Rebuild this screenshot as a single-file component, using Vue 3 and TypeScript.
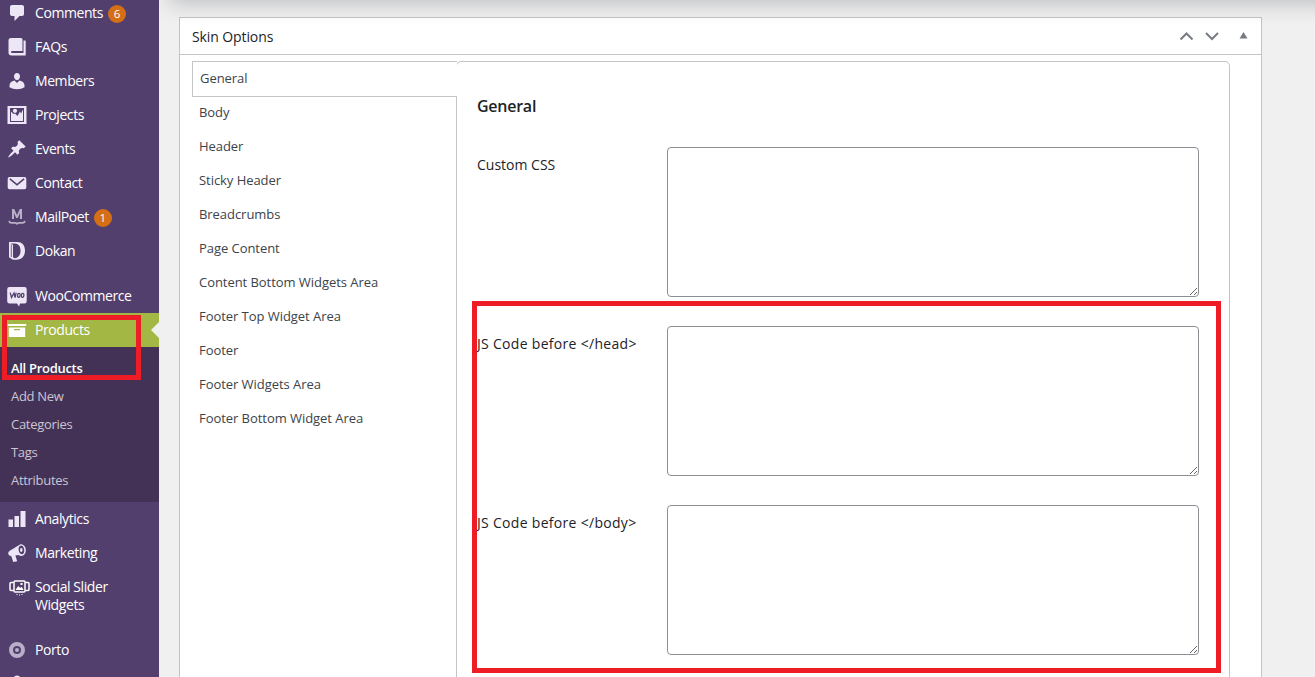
<script setup lang="ts">
import { ref } from 'vue'

interface MenuItem {
  label: string
  icon: string
  badge?: number
  current?: boolean
  gap?: boolean
}

const menuTop: MenuItem[] = [
  { label: 'Comments', icon: 'comments', badge: 6 },
  { label: 'FAQs', icon: 'book' },
  { label: 'Members', icon: 'member' },
  { label: 'Projects', icon: 'gallery' },
  { label: 'Events', icon: 'pin' },
  { label: 'Contact', icon: 'mail' },
  { label: 'MailPoet', icon: 'mailpoet', badge: 1 },
  { label: 'Dokan', icon: 'dokan' },
  { label: 'WooCommerce', icon: 'woo', gap: true },
  { label: 'Products', icon: 'archive', current: true },
]
const submenu = ['All Products', 'Add New', 'Categories', 'Tags', 'Attributes']
const menuBottom: MenuItem[] = [
  { label: 'Analytics', icon: 'bars' },
  { label: 'Marketing', icon: 'megaphone' },
  { label: 'Social Slider Widgets', icon: 'slider' },
  { label: 'Porto', icon: 'porto', gap: true },
  { label: '', icon: 'next' },
]
const groups = [menuTop, menuBottom]

const tabs = [
  'General', 'Body', 'Header', 'Sticky Header', 'Breadcrumbs', 'Page Content',
  'Content Bottom Widgets Area', 'Footer Top Widget Area', 'Footer',
  'Footer Widgets Area', 'Footer Bottom Widget Area',
]
const activeTab = ref('General')

const fields = ref([
  { label: 'Custom CSS', value: '' },
  { label: 'JS Code before </head>', value: '' },
  { label: 'JS Code before </body>', value: '' },
])
</script>

<template>
  <div class="screen">
    <nav class="sidebar">
      <template v-for="(group, g) in groups" :key="g">
        <a
          v-for="item in group"
          :key="item.icon"
          class="item"
          :class="{ current: item.current, gap: item.gap }"
        >
          <svg class="icon" viewBox="0 0 20 20" width="20" height="20">
            <path v-if="item.icon === 'comments'" d="M5 2h10q2 0 2 2v7q0 2-2 2h-2.500l-5 5v-5H5q-2 0-2-2V4q0-2 2-2z" />
            <path v-else-if="item.icon === 'book'" fill-rule="evenodd" d="M4 1h10q1.500 0 1.500 1.500V14H5q-1 0-1 1t1 1h11.500V3.500H18q.7 0 .7.700V18.500H4.500Q1.500 18.500 1.500 15.500V3.500Q1.500 1 4 1z" />
            <path v-else-if="item.icon === 'member'" d="M10 9.200c1.700 0 3-1.700 3-3.900C13 3.300 11.700 2 10 2S7 3.300 7 5.300c0 2.200 1.300 3.900 3 3.900zM7.500 9.500 10 12l2.500-2.500c3.200.5 5 2.400 5 5v1.700Q14.500 18.200 10 18.200T2.500 16.200v-1.700c0-2.600 1.800-4.500 5-5z" />
            <g v-else-if="item.icon === 'gallery'">
              <path fill-rule="evenodd" d="M.5 1h19v18h-19zM3 3v14h14V3z" />
              <path d="M4 16V6.500L6.500 9 8 8.500l2.500 2.500L13 6.500l1 2L16 4.500V16z" />
              <circle cx="8" cy="5.800" r="2.100" />
            </g>
            <path v-else-if="item.icon === 'pin'" d="m10.440 3.020 1.820-1.820 6.360 6.350-1.830 1.820c-1.050-.68-2.480-.57-3.410.36l-.75.750c-.92.930-1.040 2.350-.35 3.410l-1.830 1.820-2.410-2.410-2.800 2.790c-.42.420-3.380 2.710-3.800 2.290s1.860-3.390 2.280-3.810l2.790-2.790L4.100 9.360l1.830-1.820c1.050.69 2.480.57 3.400-.36l.75-.75c.93-.92 1.050-2.350.36-3.410z" />
            <path v-else-if="item.icon === 'mail'" fill-rule="evenodd" d="M2.500 4h15q1.800 0 1.800 1.800v8.700q0 1.800-1.800 1.800h-15q-1.800 0-1.800-1.800V5.800Q.7 4 2.500 4zM3.400 5.300l-1 1.100L10 12.800l7.600-6.400-1-1.100-6.600 5.500z" />
            <g v-else-if="item.icon === 'mailpoet'" class="dim">
              <path d="M5 12V2h2.200L10 8l2.800-6H15v10h-2V6l-2.200 5H9.200L7 6v6z" />
              <path d="M2.200 13.800q.2 2 2.300 2h3.500q2 0 2 1.700 0-1.700 2-1.700h3.500q2.100 0 2.300-2" fill="none" stroke="currentColor" stroke-width="1.700" />
            </g>
            <g v-else-if="item.icon === 'dokan'">
              <path fill-rule="evenodd" d="M2 1h8c5.200 0 8 3.300 8 8.500 0 5.500-3 9.200-8.500 9.200H6l-4-2.500zM6 3.800v12.700l1.800.7c4-.4 5.700-3.500 5.700-7.500 0-3.700-1.500-6.600-5.500-7.100-1.500-.2-3.300-.2-4.500 0z" />
              <path d="M4.300 3.500v12.500" fill="none" stroke="#523f6d" stroke-width=".8" />
            </g>
            <g v-else-if="item.icon === 'woo'">
              <path d="M2.500 1h15q2.200 0 2.200 2.200v12q0 2.200-2.200 2.200H13l-1 3-2-3H2.500Q.2 17.400.2 15.200v-12Q.2 1 2.500 1z" />
              <g class="wooMark">
                <path d="M3.200 6.700 4.500 11.500 7 7l1 4.500 1.200-4.800" />
                <ellipse cx="11.800" cy="9.300" rx="1.300" ry="2" transform="rotate(12 11.800 9.300)" />
                <ellipse cx="15.600" cy="9.300" rx="1.300" ry="2" transform="rotate(12 15.600 9.300)" />
              </g>
            </g>
            <path v-else-if="item.icon === 'archive'" fill-rule="evenodd" d="M.8 4h18.400v2H.8zM1.800 7.500h16.400v9.500H1.800zM7 9v1.200h6V9z" />
            <path v-else-if="item.icon === 'bars'" d="M13.500 2h5v16h-5zM7.500 7H12v11H7.500zM1.500 10.500H6V18H1.500z" />
            <g v-else-if="item.icon === 'megaphone'">
              <path fill-rule="evenodd" d="M13.500 1.200c3.200 0 5.300 2.600 5.300 6s-2 5.700-4.400 5.700c-1 0-2-.4-3-.9l-3 .5 1.800 5.800-4 .8-1.800-5.800C2.500 13 1.200 11.700 1.200 10.300S2.300 7.700 4 6.900zM14.200 2.500c-1.900.1-2.900 2-2.600 4.300.3 2.800 1.700 4.700 3.500 4.400 1.700-.3 2.400-2.200 2.100-4.500-.3-2.600-1.500-4.200-3-4.200z" />
              <ellipse cx="14.300" cy="7" rx="1.300" ry="2" />
            </g>
            <g v-else-if="item.icon === 'slider'" class="wide" transform="translate(.5 .5)">
              <rect x="6.500" y="3.500" width="11" height="11" rx="1" />
              <path d="M6 5H3.500q-1 0-1 1v6q0 1 1 1H6M18 5h2.500q1 0 1 1v6q0 1-1 1H18" />
              <path class="solid" d="m8 12.500 2.700-4 2 2 1.400-1.200 2 3.200zM13 5.500h2v2h-2zM9 16.500h1v1H9zM11.500 17h1v1h-1zM14 16.500h1v1h-1z" />
            </g>
            <g v-else-if="item.icon === 'porto'" class="dim">
              <circle cx="10" cy="10" r="6" fill="none" stroke="currentColor" stroke-width="4" />
              <circle cx="10" cy="10" r="2" />
            </g>
            <circle v-else cx="10" cy="5" r="3.500" />
          </svg>
          <span class="label">{{ item.label }}</span>
          <span v-if="item.badge" class="badge">{{ item.badge }}</span>
        </a>
        <div v-if="g === 0" class="submenu">
          <a v-for="(sub, i) in submenu" :key="sub" :class="{ selected: i === 0 }">{{ sub }}</a>
        </div>
      </template>
    </nav>

    <main class="content">
      <section class="metabox">
        <header class="metaHead">
          <h2>Skin Options</h2>
          <svg class="controls" width="74" height="16" viewBox="0 0 74 16">
            <path class="chevron" d="m2.500 11.500 6-6 6 6" />
            <path class="chevron" d="m28 5 6 6 6-6" />
            <path class="toggle" d="M65.500 4 69.500 10.500h-8z" />
          </svg>
        </header>
        <div class="metaBody">
          <ul class="tabs">
            <li
              v-for="tab in tabs"
              :key="tab"
              :class="{ active: tab === activeTab }"
              @click="activeTab = tab"
            >{{ tab }}</li>
          </ul>
          <div class="panel">
            <h3>{{ activeTab }}</h3>
            <label v-for="field in fields" :key="field.label" class="field">
              <span>{{ field.label }}</span>
              <textarea v-model="field.value" spellcheck="false"></textarea>
            </label>
          </div>
        </div>
      </section>
    </main>

    <div class="topShadow"></div>
    <div class="mark markMenu"></div>
    <div class="mark markFields"></div>
  </div>
</template>

<style>
html, body { margin: 0; overflow: hidden; }
</style>

<style scoped>
* { box-sizing: border-box; }
.screen {
  position: relative;
  display: flex;
  width: 1315px;
  height: 677px;
  overflow: hidden;
  background: #f0f0f0;
  font-family: "Open Sans", "Noto Sans", sans-serif;
  font-size: 13px;
  color: #1d2327;
}
.sidebar {
  width: 159px;
  height: 681px;
  margin-top: -4px;
  flex: none;
  background: #523f6d;
  z-index: 1;
}
.item {
  position: relative;
  display: flex;
  align-items: flex-start;
  min-height: 34px;
  padding: 8px 20px 8px 7px;
  color: #fff;
  font-size: 14px;
  line-height: 18px;
  letter-spacing: -0.42px;
}
.item.gap { margin-top: 11px; }
.item.current { background: #a3b745; }
.item.current::after {
  content: "";
  position: absolute;
  right: 0;
  top: 9px;
  border: 8px solid transparent;
  border-left: 0;
  border-right-color: #f0f0f0;
}
.icon {
  flex: none;
  margin: -1px 8px -1px 0;
  overflow: visible;
  fill: currentColor;
  color: #ece6f6;
}
.current .icon { color: #fff; }
.dim { color: #b9afc8; fill: currentColor; }
.wooMark { fill: none; stroke: #523f6d; stroke-width: 1.3; }
.wide { fill: none; stroke: #fff; stroke-width: 1.5; }
.wide .solid { fill: #fff; stroke: none; }
.badge {
  width: 18px;
  height: 18px;
  margin: 1px 0 -1px 5px;
  border-radius: 50%;
  background: #d46f15;
  font-size: 11.5px;
  font-weight: 500;
  line-height: 18px;
  text-align: center;
  letter-spacing: 0;
}
.submenu {
  height: 155px;
  padding: 7px 11px 8px;
  background: #433256;
}
.submenu a {
  display: block;
  height: 28px;
  line-height: 28px;
  font-size: 13px;
  letter-spacing: -0.3px;
  color: #cbc5d3;
}
.submenu a.selected { color: #fff; font-weight: 600; }
.content { flex: 1; padding: 17px 53px 0 20px; }
.metabox {
  width: 1083px;
  height: 680px;
  border: 1px solid #c3c4c7;
  background: #fff;
}
.metaHead {
  display: flex;
  align-items: center;
  justify-content: space-between;
  height: 37px;
  padding: 0 9px 0 12px;
  border-bottom: 1px solid #c3c4c7;
}
.metaHead h2 {
  margin: 2px 0 0;
  font-size: 14px;
  line-height: 20px;
  font-weight: 500;
  letter-spacing: -0.1px;
}
.chevron { fill: none; stroke: #787c82; stroke-width: 2; }
.toggle { fill: #787c82; }
.metaBody { display: flex; padding: 6px 0 0 12px; }
.tabs { width: 264px; margin: 0; padding: 0; list-style: none; flex: none; }
.tabs li {
  height: 34px;
  padding-left: 7px;
  line-height: 34px;
  letter-spacing: -0.05px;
  color: #3c434a;
}
.tabs li.active {
  position: relative;
  z-index: 1;
  width: 265px;
  height: 36px;
  margin-bottom: -2px;
  border: 1px solid #c3c4c7;
  border-right: 0;
  background: #fff;
  line-height: 32px;
}
.panel {
  width: 774px;
  height: 640px;
  padding: 33px 30px 0 20px;
  border: 1px solid #c3c4c7;
  border-radius: 5px;
}
.panel h3 {
  margin: 0 0 30px;
  font-size: 16px;
  line-height: 22px;
  font-weight: 600;
  letter-spacing: -0.25px;
}
.field { display: flex; justify-content: space-between; height: 150px; margin-bottom: 29px; }
.field span { padding-top: 9px; font-size: 14px; line-height: 18px; }
.field + .field span { letter-spacing: 0.3px; }
.field textarea {
  width: 532px;
  height: 150px;
  border: 1px solid #8c8f94;
  border-radius: 4px;
  background: #fff;
  outline: none;
}
.topShadow {
  position: absolute;
  left: 170px;
  top: -40px;
  width: 1190px;
  height: 40px;
  box-shadow: 0 2px 22px rgba(30, 35, 50, 0.28);
}
.mark { position: absolute; border: 5px solid #ee1c25; pointer-events: none; z-index: 2; }
.markMenu { left: 2px; top: 315px; width: 139px; height: 65px; }
.markFields { left: 472px; top: 301px; width: 749px; height: 372px; }
</style>
